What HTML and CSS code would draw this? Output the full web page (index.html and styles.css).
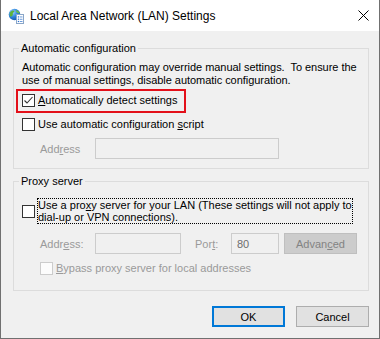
FILE: index.html
```html
<!DOCTYPE html>
<html lang="en">
<head>
<meta charset="utf-8">
<title>Local Area Network (LAN) Settings</title>
<link rel="stylesheet" href="styles.css">
</head>
<body>
<div class="window">
  <div class="titlebar">
    <svg class="app-icon" width="16" height="16" viewBox="0 0 16 16">
      <defs>
        <radialGradient id="g" cx="0.35" cy="0.3" r="0.8">
          <stop offset="0" stop-color="#9fd4ff"/>
          <stop offset="0.5" stop-color="#2f86db"/>
          <stop offset="1" stop-color="#0d4fa8"/>
        </radialGradient>
      </defs>
      <circle cx="6.5" cy="6.5" r="5.8" fill="url(#g)"/>
      <path d="M2.2 4.2 C3.5 2.5 5.5 2 6.5 3 C6 4.5 4.5 4.5 4.8 6.2 C5 7.6 3.6 8.2 2.6 8.8 C1.5 7.5 1.4 5.6 2.2 4.2 Z" fill="#5db33a"/>
      <path d="M8 2.2 C9.8 2.3 11.3 3.6 11.8 5.2 C10.6 5.6 9.6 4.8 8.8 4.2 C8.2 3.7 7.7 3 8 2.2 Z" fill="#6cc043"/>
      <rect x="8.5" y="6.5" width="7" height="9" fill="#ffffff" stroke="#8aa6c8"/>
      <rect x="9.8" y="8.3" width="1.4" height="1.2" fill="#2a6fd0"/>
      <rect x="12" y="8.5" width="2.5" height="0.9" fill="#5a8fd8"/>
      <rect x="9.8" y="10.6" width="1.4" height="1.2" fill="#2a6fd0"/>
      <rect x="12" y="10.8" width="2.5" height="0.9" fill="#5a8fd8"/>
      <rect x="9.8" y="12.9" width="1.4" height="1.2" fill="#2a6fd0"/>
      <rect x="12" y="13.1" width="2.5" height="0.9" fill="#5a8fd8"/>
    </svg>
    <span class="title">Local Area Network (LAN) Settings</span>
    <svg class="close" width="11" height="11" viewBox="0 0 11 11">
      <path d="M0.5 0.5 L10.5 10.5 M10.5 0.5 L0.5 10.5" stroke="#000" stroke-width="1" fill="none"/>
    </svg>
  </div>

  <div class="content">
    <div class="group group-auto">
      <div class="legend">Automatic configuration</div>
      <p class="desc">Automatic configuration may override manual settings.&nbsp; To ensure the<br>use of manual settings, disable automatic configuration.</p>
      <div class="highlight">
        <div class="check-row">
          <span class="checkbox">
            <svg width="11" height="11" viewBox="0 0 11 11"><path d="M1.5 5.5 L4 8 L9.5 2" stroke="#333" stroke-width="1.1" fill="none"/></svg>
          </span>
          <span class="check-label"><u>A</u>utomatically detect settings</span>
        </div>
      </div>
      <div class="check-row row-script">
        <span class="checkbox"></span>
        <span class="check-label">Use automatic configuration <u>s</u>cript</span>
      </div>
      <div class="field-row row-addr1">
        <span class="field-label disabled">Add<u>r</u>ess</span>
        <span class="textbox tb-addr1"></span>
      </div>
    </div>

    <div class="group group-proxy">
      <div class="legend">Proxy server</div>
      <div class="proxy-row">
        <span class="checkbox"></span>
        <span class="focus-label">Use a pro<u>x</u>y server for your LAN (These settings will not apply to<br>dial-up or VPN connections).</span>
      </div>
      <div class="field-row row-addr2">
        <span class="field-label disabled">Addr<u>e</u>ss:</span>
        <span class="textbox tb-addr2"></span>
        <span class="port-label disabled">Por<u>t</u>:</span>
        <span class="textbox tb-port">80</span>
        <span class="btn btn-disabled btn-advanced">Advan<u>c</u>ed</span>
      </div>
      <div class="check-row row-bypass">
        <span class="checkbox checkbox-disabled"></span>
        <span class="check-label disabled"><u>B</u>ypass proxy server for local addresses</span>
      </div>
    </div>

    <div class="buttons">
      <span class="btn btn-default">OK</span>
      <span class="btn">Cancel</span>
    </div>
  </div>
</div>
</body>
</html>
```

FILE: styles.css
```css
html, body {
  margin: 0;
  padding: 0;
  background: #ffffff;
}

.window {
  width: 380px;
  height: 339px;
  box-sizing: border-box;
  border: 1px solid #707070;
  border-top: none;
  background: #f0f0f0;
  display: flex;
  flex-direction: column;
  font-family: "Liberation Sans", Arial, sans-serif;
  font-size: 11px;
  color: #000000;
}

.titlebar {
  height: 31px;
  flex: none;
  background: #ffffff;
  display: flex;
  align-items: center;
  padding: 0 10px 0 7px;
}

.app-icon {
  flex: none;
  display: block;
}

.title {
  margin-left: 6px;
  font-size: 12px;
  line-height: 16px;
}

.close {
  margin-left: auto;
  display: block;
}

.content {
  flex: 1;
  padding: 17px 10px 0 12px;
}

.group {
  border: 1px solid #dcdcdc;
  padding: 0 8px 9px 8px;
}

.group-proxy {
  margin-top: 12px;
  padding-bottom: 15px;
}

.legend {
  width: fit-content;
  height: 15px;
  line-height: 15px;
  margin: -8px 0 0 -3px;
  padding: 0 2px;
  background: #f0f0f0;
}

.desc {
  margin: 5px 0 0 0;
  line-height: 13px;
  white-space: nowrap;
  letter-spacing: -0.04px;
}

.highlight {
  width: fit-content;
  margin: 2px 0 0 -6px;
  border: 2px solid #e3101a;
  padding: 3px 7px 4px 4px;
}

.check-row {
  display: flex;
  align-items: center;
  height: 13px;
}

.check-label {
  margin-left: 3px;
  line-height: 13px;
  white-space: nowrap;
}

.row-script {
  margin-top: 5px;
}

.checkbox {
  flex: none;
  width: 13px;
  height: 13px;
  box-sizing: border-box;
  border: 1px solid #333333;
  background: #ffffff;
  display: flex;
  align-items: center;
  justify-content: center;
}

.checkbox svg {
  display: block;
}

.checkbox-disabled {
  border-color: #cccccc;
  background: #fcfcfc;
}

.disabled {
  color: #9a9a9a;
}

.field-row {
  display: flex;
  align-items: center;
  padding-left: 18px;
}

.row-addr1 {
  margin-top: 7px;
}

.row-addr2 {
  margin-top: 9px;
}

.field-label {
  width: 55px;
  flex: none;
  white-space: nowrap;
}

.port-label {
  width: 36px;
  flex: none;
  margin-left: 14px;
}

.textbox {
  flex: none;
  height: 21px;
  box-sizing: border-box;
  border: 1px solid #cccccc;
  background: #f0f0f0;
  display: flex;
  align-items: center;
}

.tb-addr1 {
  width: 184px;
}

.tb-addr2 {
  width: 86px;
}

.tb-port {
  width: 48px;
  padding-left: 5px;
  color: #6d6d6d;
}

.proxy-row {
  display: flex;
  align-items: center;
  margin-top: 9px;
}

.focus-label {
  margin-left: 2px;
  width: 316px;
  box-sizing: border-box;
  border: 1px dotted #000000;
  line-height: 12px;
  white-space: nowrap;
}

.row-bypass {
  margin-top: 8px;
  padding-left: 18px;
}

.buttons {
  display: flex;
  justify-content: flex-end;
  gap: 11px;
  margin-top: 15px;
}

.btn {
  flex: none;
  width: 73px;
  height: 21px;
  box-sizing: border-box;
  border: 1px solid #adadad;
  background: #e1e1e1;
  display: flex;
  align-items: center;
  justify-content: center;
  white-space: nowrap;
}

.btn-default {
  border: 2px solid #0078d7;
}

.btn-disabled {
  background: #cccccc;
  border-color: #bfbfbf;
  color: #838383;
}

.btn-advanced {
  margin-left: 5px;
}

u {
  text-decoration-thickness: 1px;
  text-underline-offset: 1px;
}
```
